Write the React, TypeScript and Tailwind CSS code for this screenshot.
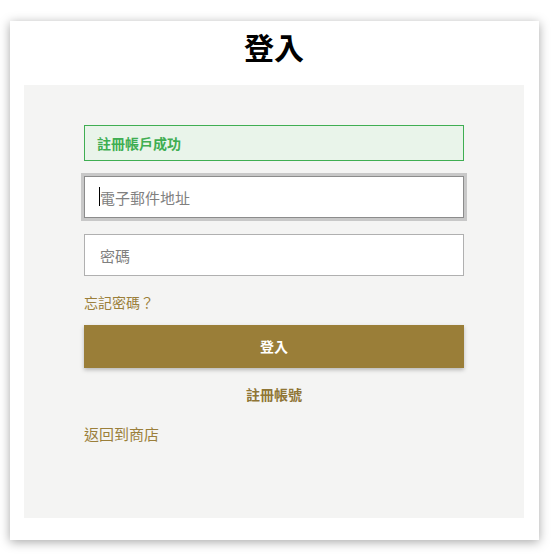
import React from "react";

export default function App() {
  return (
    <div
      className="min-h-[559px] w-[558px] bg-white pt-[21px] pl-[10px]"
      style={{ fontFamily: '"Noto Sans CJK TC", "Noto Sans", sans-serif' }}
    >
      <div className="flex h-[519px] w-[529px] flex-col bg-white pl-[14px] pr-[15px] shadow-[0_2px_10px_rgba(0,0,0,0.35)]">
        <div className="flex h-[64px] items-start justify-center pt-[9px]">
          <h1 className="text-[30px] font-bold leading-[32px] text-black">登入</h1>
        </div>
        <div className="flex h-[433px] flex-col bg-[#f4f4f3] px-[60px] pt-[40px]">
          <div className="flex h-[36px] items-center border border-[#3fae52] bg-[#e9f4ea] px-[12px] text-[14px] font-bold text-[#3fae52]">
            註冊帳戶成功
          </div>
          <div className="relative mt-[15px] h-[42px] outline outline-[3px] outline-[#c8c8c8]">
            <input
              className="h-full w-full border border-[#8c8c8c] bg-white px-[15px] text-[15px] text-[#333] placeholder:text-[#808080] focus:outline-none"
              placeholder="電子郵件地址"
              readOnly
            />
            <span className="absolute left-[15px] top-[11px] h-[19px] w-px bg-black" />
          </div>
          <input
            className="mt-[16px] h-[42px] w-full border border-[#b0b0b0] bg-white px-[15px] text-[15px] text-[#333] placeholder:text-[#808080] focus:outline-none"
            placeholder="密碼"
            type="password"
            readOnly
          />
          <a className="mt-[16px] text-[14px] leading-[20px] text-[#9b7f3a]">忘記密碼？</a>
          <button className="mt-[13px] h-[43px] w-full bg-[#9a7e38] text-[14px] font-bold text-white shadow-[0_2px_4px_rgba(0,0,0,0.25)]">
            登入
          </button>
          <a className="mt-[16px] text-center text-[14px] font-bold leading-[20px] text-[#8f7535]">註冊帳號</a>
          <a className="mt-[20px] text-[15px] leading-[20px] text-[#9b7f3a]">返回到商店</a>
        </div>
      </div>
    </div>
  );
}
